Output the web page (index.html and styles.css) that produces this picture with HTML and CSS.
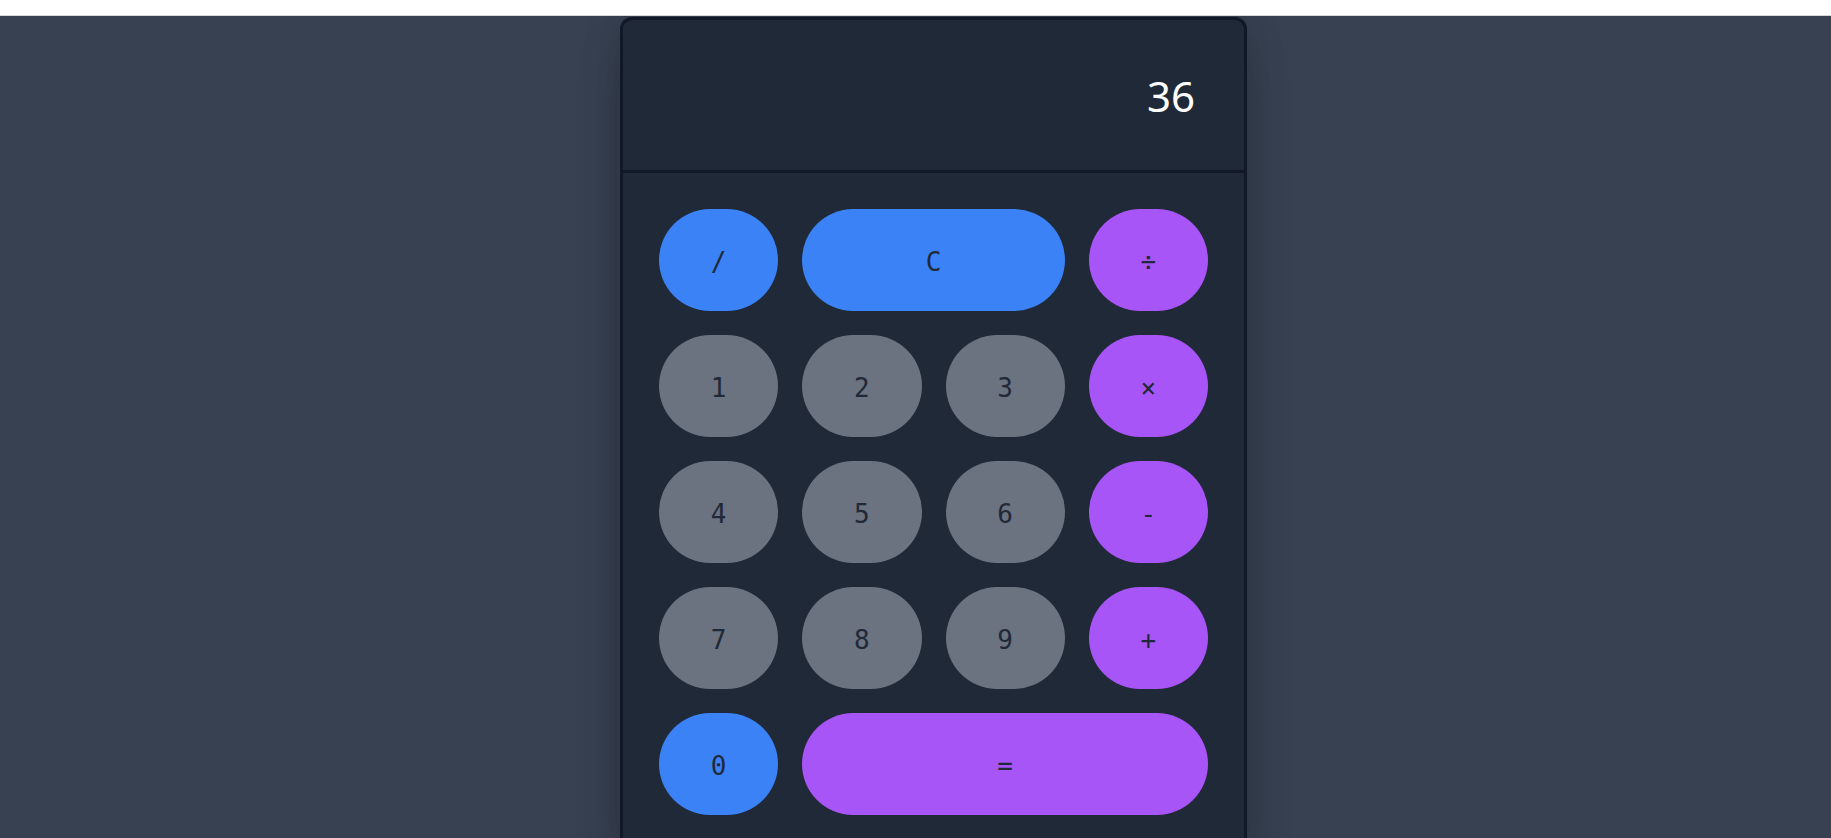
FILE: index.html
```html
<!DOCTYPE html>
<html lang="en">
<head>
<meta charset="utf-8">
<title>Calculator</title>
<link rel="stylesheet" href="styles.css">
</head>
<body>
<div class="topbar"></div>
<main class="stage">
  <div class="calc">
    <div class="display">36</div>
    <div class="keys">
      <button class="key blue">/</button>
      <button class="key blue span2">C</button>
      <button class="key purple">÷</button>
      <button class="key gray">1</button>
      <button class="key gray">2</button>
      <button class="key gray">3</button>
      <button class="key purple">×</button>
      <button class="key gray">4</button>
      <button class="key gray">5</button>
      <button class="key gray">6</button>
      <button class="key purple">-</button>
      <button class="key gray">7</button>
      <button class="key gray">8</button>
      <button class="key gray">9</button>
      <button class="key purple">+</button>
      <button class="key blue">0</button>
      <button class="key purple span3">=</button>
    </div>
  </div>
</main>
</body>
</html>
```

FILE: styles.css
```css
html, body {
  margin: 0;
  padding: 0;
}
body {
  background: #374151;
  font-family: "Noto Sans", "Open Sans", sans-serif;
  overflow: hidden;
  height: 838px;
}
.topbar {
  position: relative;
  z-index: 1;
  height: 15px;
  background: #ffffff;
  border-bottom: 1px solid #d6d6d6;
}
.stage {
  display: flex;
  justify-content: center;
  padding-left: 36px;
  padding-top: 1px;
}
.calc {
  width: 621px;
  background: #1f2937;
  border: 3px solid #111827;
  border-radius: 12px;
  box-shadow: 0 25px 50px -12px rgba(0, 0, 0, 0.25), 0 0 40px rgba(0, 0, 0, 0.12);
}
.display {
  display: flex;
  align-items: center;
  justify-content: flex-end;
  padding-right: 49px;
  color: #ffffff;
  font-size: 42px;
  border-bottom: 3px solid #111827;
  box-sizing: border-box;
  height: 153px;
}
.keys {
  display: grid;
  grid-template-columns: repeat(4, 1fr);
  grid-auto-rows: 102px;
  gap: 24px;
  padding: 36px;
}
.key {
  border: none;
  border-radius: 9999px;
  font-family: "DejaVu Sans Mono", "Liberation Mono", monospace;
  font-size: 26px;
  color: #1f2937;
  padding: 4px 0 0 0;
  cursor: pointer;
}
.blue { background: #3b82f6; }
.purple { background: #a855f7; }
.gray { background: #6b7280; }
.span2 { grid-column: span 2; }
.span3 { grid-column: span 3; }
```
